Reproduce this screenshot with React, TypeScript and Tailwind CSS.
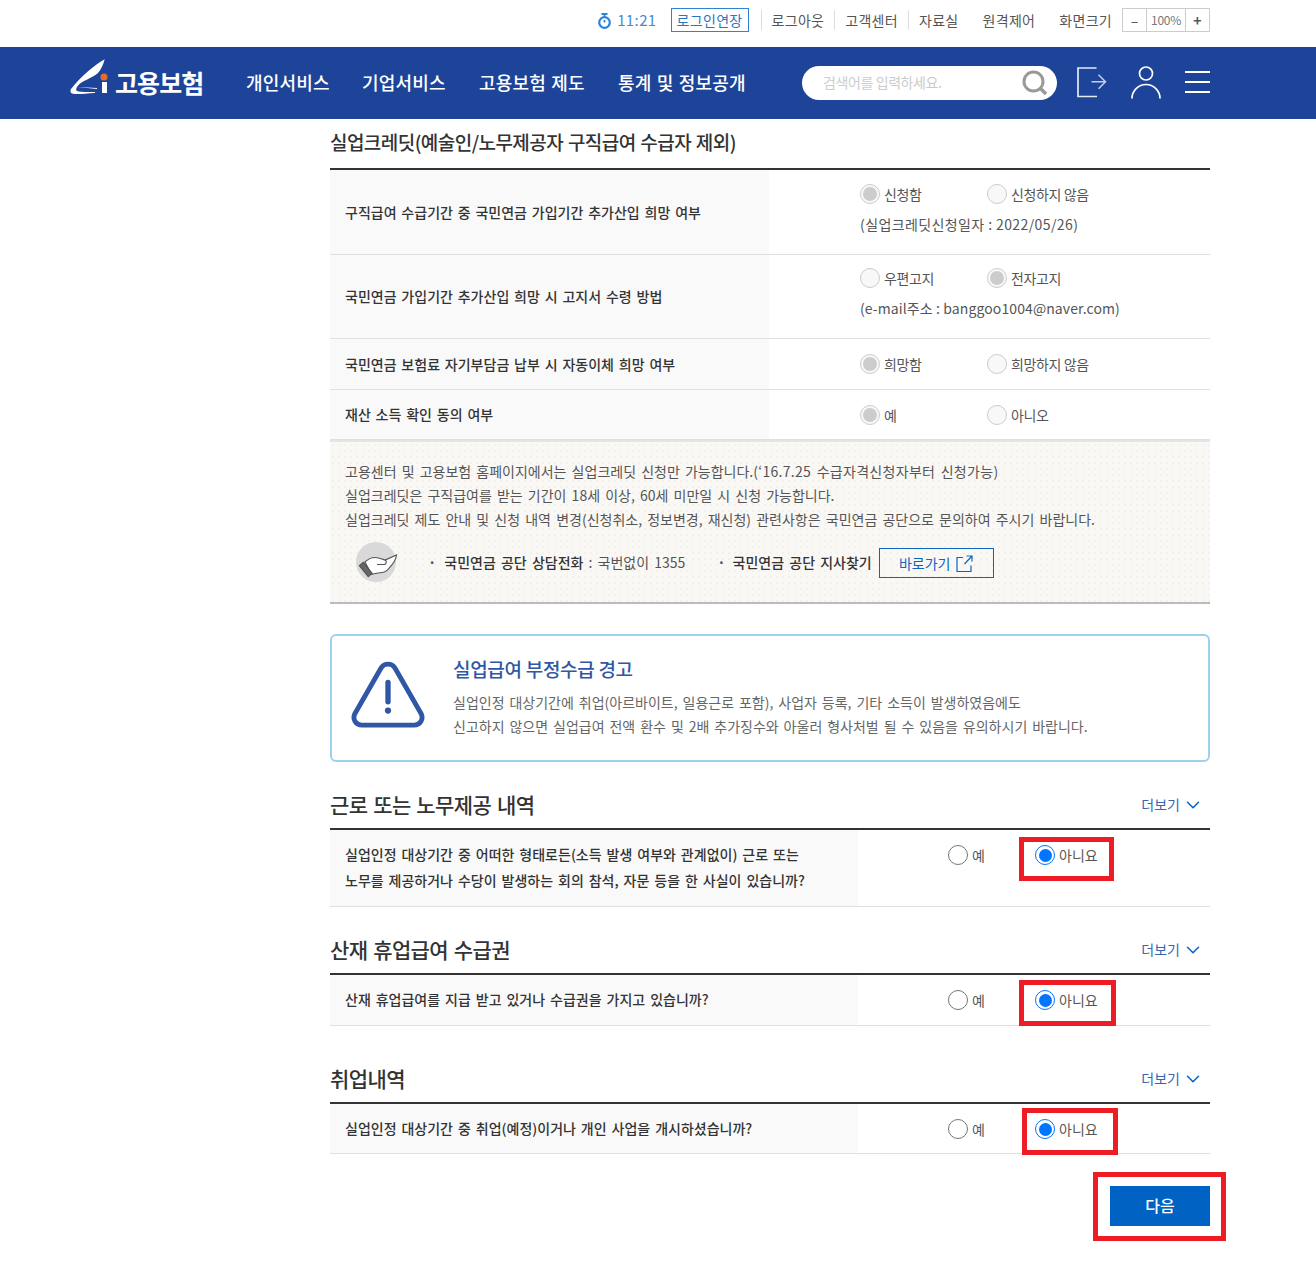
import { ChevronDown } from "lucide-react";

const FONT = "font-['Noto_Sans_CJK_KR','Noto_Sans',sans-serif]";

function GrayRadio({ on, label }: { on?: boolean; label: string }) {
  return (
    <span className="flex items-center gap-[4px] text-[14px] leading-[20px] tracking-[-0.4px] text-[#555]">
      <span className="flex h-[20px] w-[20px] items-center justify-center rounded-full border border-[#ccc] bg-[#f8f8f8]">
        {on && <span className="h-[14px] w-[14px] rounded-full bg-[#ccc]" />}
      </span>
      {label}
    </span>
  );
}

function ChoiceRow({
  title,
  height,
  a,
  b,
  on,
  note,
  noteClass,
}: {
  title: string;
  height: string;
  a: string;
  b: string;
  on: "a" | "b";
  note?: string;
  noteClass?: string;
}) {
  return (
    <div className={`flex border-b border-[#e0e0e0] ${height}`}>
      <div className="flex w-[439px] items-center bg-[#f9f9f9] pl-[15px] text-[14px] font-medium [word-spacing:1.7px] text-[#333]">
        {title}
      </div>
      <div className={`flex flex-1 flex-col justify-center pl-[91px] ${note ? "pb-[7px]" : ""}`}>
        <div className="flex">
          <div className="w-[127px]">
            <GrayRadio on={on === "a"} label={a} />
          </div>
          <GrayRadio on={on === "b"} label={b} />
        </div>
        {note && <div className={`mt-[10px] text-[14px] leading-[20px] text-[#555] ${noteClass}`}>{note}</div>}
      </div>
    </div>
  );
}

function SectionHead({ title, mt }: { title: string; mt: string }) {
  return (
    <div className={`flex h-[47px] items-center justify-between border-b-2 border-[#333] pb-[2px] ${mt}`}>
      <h2 className="text-[21px] font-medium tracking-[-0.6px] [word-spacing:1.6px] text-[#333]">{title}</h2>
      <span className="flex items-center gap-[2px] pr-[6px] text-[14px] text-[#3566b0]">
        더보기
        <ChevronDown size={22} strokeWidth={1.7} className="text-[#0b66c3]" />
      </span>
    </div>
  );
}

function BlueRadio({ on, label }: { on?: boolean; label: string }) {
  return (
    <span className="flex items-center gap-[4px] text-[14px] leading-[20px] text-[#555]">
      {on ? (
        <span className="flex h-[20px] w-[20px] items-center justify-center rounded-full border-[1.5px] border-[#0075ff] bg-white">
          <span className="h-[13px] w-[13px] rounded-full bg-[#0075ff]" />
        </span>
      ) : (
        <span className="h-[20px] w-[20px] rounded-full border border-[#767676] bg-white" />
      )}
      {label}
    </span>
  );
}

function QuestionRow({
  lines,
  height,
  box,
}: {
  lines: string[];
  height: string;
  box: string;
}) {
  return (
    <div className={`flex border-b border-[#e0e0e0] ${height}`}>
      <div className="flex w-[528px] flex-col justify-center bg-[#f9f9f9] pb-[2px] pl-[15px] text-[14px] font-medium leading-[26px] [word-spacing:1.8px] text-[#333]">
        {lines.map((l) => (
          <div key={l}>{l}</div>
        ))}
      </div>
      <div className="flex flex-1 pl-[90px] pt-[15px]">
        <div className="w-[87px]">
          <BlueRadio label="예" />
        </div>
        <div className="relative">
          <BlueRadio on label="아니요" />
          {/* 빨간 강조 표시 */}
          <span className={`absolute border-[5px] border-[#ee1c25] ${box}`} />
        </div>
      </div>
    </div>
  );
}

export default function App() {
  return (
    <div className={`${FONT} h-[1271px] w-full bg-white`}>
      {/* top bar */}
      <div className="flex h-[47px] items-center justify-end pr-[106px] pb-[7px] text-[14px] tracking-[0.3px] text-[#555]">
        <svg width="15" height="16" viewBox="0 0 15 16" fill="none" className="mr-[5px] mt-[1px]">
          <circle cx="7.5" cy="9.5" r="5.3" stroke="#2e83d6" strokeWidth="2.2" />
          <path d="M4.5 1h6M7.5 1v3M7.5 7v2.5" stroke="#2e83d6" strokeWidth="1.8" />
        </svg>
        <span className="mr-[14px] text-[15px] tracking-[0.4px] text-[#4a8ad0]">11:21</span>
        <span className="mr-[12px] border border-[#2e83d6] px-[5px] leading-[22px] text-[#2e75c0]">로그인연장</span>
        <span className="flex h-[20px] items-center border-l border-[#ddd] pl-[10px] pr-[10px]">로그아웃</span>
        <span className="flex h-[20px] items-center border-l border-[#ddd] pl-[10px] pr-[10px]">고객센터</span>
        <span className="flex h-[20px] items-center border-l border-[#ddd] pl-[10px]">자료실</span>
        <span className="ml-[24px]">원격제어</span>
        <span className="ml-[24px] mr-[10px]">화면크기</span>
        <div className="flex h-[24px] w-[88px] border border-[#ccc] tracking-normal text-[#555]">
          <span className="flex w-[23px] items-center justify-center">–</span>
          <span className="flex w-[40px] items-center justify-center border-x border-[#ccc] text-[12px] tracking-[-0.3px] text-[#777]">
            100%
          </span>
          <span className="flex flex-1 items-center justify-center font-bold">+</span>
        </div>
      </div>

      {/* nav */}
      <div className="flex h-[72px] items-center bg-[#1d4499] pl-[70px] pr-[106px]">
        <div className="flex w-[176px] items-center">
          <svg width="40" height="42" viewBox="0 0 40 42" className="mb-[8px]">
            <path d="M34.7 1.3C25 7 12 17 1 31C-0.5 34 1 36 5 36C12 36 18 35.5 25 35L25 34C18 34.2 10 34 7 33C5.5 32 6 29 10 25.5C15 22 22 20 28 15C31 12 33 7 34.7 1.3Z" fill="#fff" />
            <path d="M7 29L27 30L27 31Z" fill="#fff" />
            <circle cx="34" cy="19" r="3.5" fill="#ea6a2a" />
            <rect x="32" y="24" width="5" height="11" fill="#fff" />
          </svg>
          <span className="ml-[5px] text-[25px] font-bold tracking-[-0.9px] text-white">고용보험</span>
        </div>
        <nav className="mb-[2px] flex text-[18px] font-medium tracking-[0.2px] [word-spacing:1px] text-white">
          <span className="w-[116px]">개인서비스</span>
          <span className="w-[117px]">기업서비스</span>
          <span className="w-[139px]">고용보험 제도</span>
          <span>통계 및 정보공개</span>
        </nav>
        <div className="ml-auto flex items-center">
          <div className="flex h-[34px] w-[255px] items-center justify-between rounded-full bg-white pl-[21px] pr-[8px] text-[14px] tracking-[-0.4px] text-[#ccc]">
            <span className="mb-[2px]">검색어를 입력하세요.</span>
            <svg width="28" height="28" viewBox="0 0 28 28" fill="none" stroke="#999">
              <circle cx="12.5" cy="12.5" r="9.5" strokeWidth="3" />
              <path d="M19.5 19.5L25 25" strokeWidth="3.5" />
            </svg>
          </div>
          <svg width="30" height="32" viewBox="0 0 30 32" fill="none" stroke="#e4eaf6" strokeWidth="1.7" className="mb-[2px] ml-[20px]">
            <path d="M19.5 2H1v28.5h19" />
            <path d="M14.5 15.7H28.5M21.5 8.7l7 7-7 7" stroke="#c5d0ea" strokeWidth="1.5" />
          </svg>
          <svg width="30" height="33" viewBox="0 0 30 33" fill="none" stroke="#fff" strokeWidth="1.7" className="mb-[2px] ml-[24px]">
            <circle cx="15" cy="7.5" r="6.5" />
            <path d="M1 32.5A14 14 0 0 1 29 32.5" />
          </svg>
          <div className="mb-[2px] ml-[24px] flex h-[22px] w-[25px] flex-col justify-between">
            <span className="h-[2px] bg-white" />
            <span className="h-[2px] bg-white" />
            <span className="h-[2px] bg-white" />
          </div>
        </div>
      </div>

      <div className="ml-[330px] w-[880px]">
        <div className="flex h-[51px] items-center border-b-2 border-[#333] pb-[2px] text-[19px] font-medium tracking-[-0.55px] [word-spacing:1px] text-[#333]">
          실업크레딧(예술인/노무제공자 구직급여 수급자 제외)
        </div>
        <ChoiceRow
          title="구직급여 수급기간 중 국민연금 가입기간 추가산입 희망 여부"
          height="h-[85px]"
          a="신청함"
          b="신청하지 않음"
          on="a"
          note="(실업크레딧신청일자 : 2022/05/26)"
          noteClass="tracking-[0.4px]"
        />
        <ChoiceRow
          title="국민연금 가입기간 추가산입 희망 시 고지서 수령 방법"
          height="h-[84px]"
          a="우편고지"
          b="전자고지"
          on="b"
          note="(e-mail주소 : banggoo1004@naver.com)"
          noteClass="tracking-[0.1px]"
        />
        <ChoiceRow title="국민연금 보험료 자기부담금 납부 시 자동이체 희망 여부" height="h-[51px]" a="희망함" b="희망하지 않음" on="a" />
        <ChoiceRow title="재산 소득 확인 동의 여부" height="h-[50px]" a="예" b="아니오" on="a" />

        {/* notice */}
        <div className="h-[164px] border-y-2 border-b-[#bbb] border-t-[#e5e5e5] bg-[#faf8f5] bg-[radial-gradient(#f4f1ed_1px,transparent_1px)] bg-[length:6px_6px] pl-[15px] pt-[17px] text-[14px] leading-[24px] [word-spacing:2px] text-[#555]">
          <p>
            고용센터 및 고용보험 홈페이지에서는 실업크레딧 신청만 가능합니다.
            <span className="tracking-[0.3px]">(‘16.7.25 수급자격신청자부터 신청가능)</span>
          </p>
          <p>실업크레딧은 구직급여를 받는 기간이 18세 이상, 60세 미만일 시 신청 가능합니다.</p>
          <p>실업크레딧 제도 안내 및 신청 내역 변경(신청취소, 정보변경, 재신청) 관련사항은 국민연금 공단으로 문의하여 주시기 바랍니다.</p>
          <div className="mt-[11px] flex items-center">
            <svg width="42" height="40" viewBox="0 0 42 40" fill="none" stroke="#555" strokeWidth="1.2" className="ml-[11px] -mr-[2px]">
              <circle cx="20" cy="20" r="20" fill="#d9d9d9" stroke="none" />
              <path d="M9 20C12 17 15 15.5 19 15.5C22 15.5 26 17 29 18L40.5 13C40 17 37 22 34 25C32 28 30 30 26 30.5C22 31 18 31.5 15.5 32.5Z" fill="#fff" />
              <path d="M21 22.5L28 22.5C30.5 22.5 31 19 29 18" />
              <path d="M3.3 23.7L7.3 20.3L16 31.3L12.3 34.7Z" fill="#666" />
            </svg>
            <span className="ml-[32px] mr-[8px] font-bold">·</span>
            <span><b className="font-medium text-[#333]">국민연금 공단 상담전화</b> : 국번없이 1355</span>
            <span className="ml-[32px] mr-[7px] font-bold">·</span>
            <b className="font-medium text-[#333]">국민연금 공단 지사찾기</b>
            <span className="ml-[7px] mt-[2px] flex h-[30px] w-[115px] items-center justify-center gap-[6px] border border-[#0b66c3] text-[#0b66c3]">
              바로가기
              <svg width="17" height="17" viewBox="0 0 17 17" fill="none" stroke="#0b66c3" strokeWidth="1.2">
                <path d="M7 2.5H1v14h14v-6M10.5 1H16v5.5M16 1L8.5 9" />
              </svg>
            </span>
          </div>
        </div>

        {/* warning */}
        <div className="mt-[30px] flex h-[128px] rounded-[6px] border-2 border-[#9fd0ec] pl-[19px]">
          <svg width="74" height="68" viewBox="0 0 76 70" fill="none" className="mt-[25px]">
            <path d="M31 7C34 2 42 2 45 7L72 54C75 60 71 66 65 66H11C5 66 1 60 4 54Z" stroke="#2f57a5" strokeWidth="5" strokeLinejoin="round" />
            <path d="M38 22V42" stroke="#2f57a5" strokeWidth="5.5" strokeLinecap="round" />
            <circle cx="38" cy="51" r="3.2" fill="#2f57a5" />
          </svg>
          <div className="ml-[28px] pt-[18px]">
            <div className="text-[19px] font-medium leading-[30px] tracking-[-0.3px] text-[#2f57a5]">실업급여 부정수급 경고</div>
            <div className="mt-[6px] text-[14px] leading-[24px] [word-spacing:1.8px] text-[#666]">
              <p>실업인정 대상기간에 취업(아르바이트, 일용근로 포함), 사업자 등록, 기타 소득이 발생하였음에도</p>
              <p>신고하지 않으면 실업급여 전액 환수 및 2배 추가징수와 아울러 형사처벌 될 수 있음을 유의하시기 바랍니다.</p>
            </div>
          </div>
        </div>

        <SectionHead title="근로 또는 노무제공 내역" mt="mt-[21px]" />
        <QuestionRow
          lines={[
            "실업인정 대상기간 중 어떠한 형태로든(소득 발생 여부와 관계없이) 근로 또는",
            "노무를 제공하거나 수당이 발생하는 회의 참석, 자문 등을 한 사실이 있습니까?",
          ]}
          height="h-[77px]"
          box="-left-[16px] -top-[8px] h-[44px] w-[95px]"
        />
        <SectionHead title="산재 휴업급여 수급권" mt="mt-[21px]" />
        <QuestionRow
          lines={["산재 휴업급여를 지급 받고 있거나 수급권을 가지고 있습니까?"]}
          height="h-[51px]"
          box="-left-[16px] -top-[10px] h-[46px] w-[97px]"
        />
        <SectionHead title="취업내역" mt="mt-[31px]" />
        <QuestionRow
          lines={["실업인정 대상기간 중 취업(예정)이거나 개인 사업을 개시하셨습니까?"]}
          height="h-[50px]"
          box="-left-[13px] -top-[11px] h-[47px] w-[96px]"
        />

        <div className="relative mt-[32px] flex justify-end">
          <button className="h-[40px] w-[100px] bg-[#0063c4] pb-[2px] text-[16px] font-medium text-white">다음</button>
          <span className="absolute -right-[16px] -top-[14px] h-[69px] w-[133px] border-[5px] border-[#ee1c25]" />
        </div>
      </div>
    </div>
  );
}
